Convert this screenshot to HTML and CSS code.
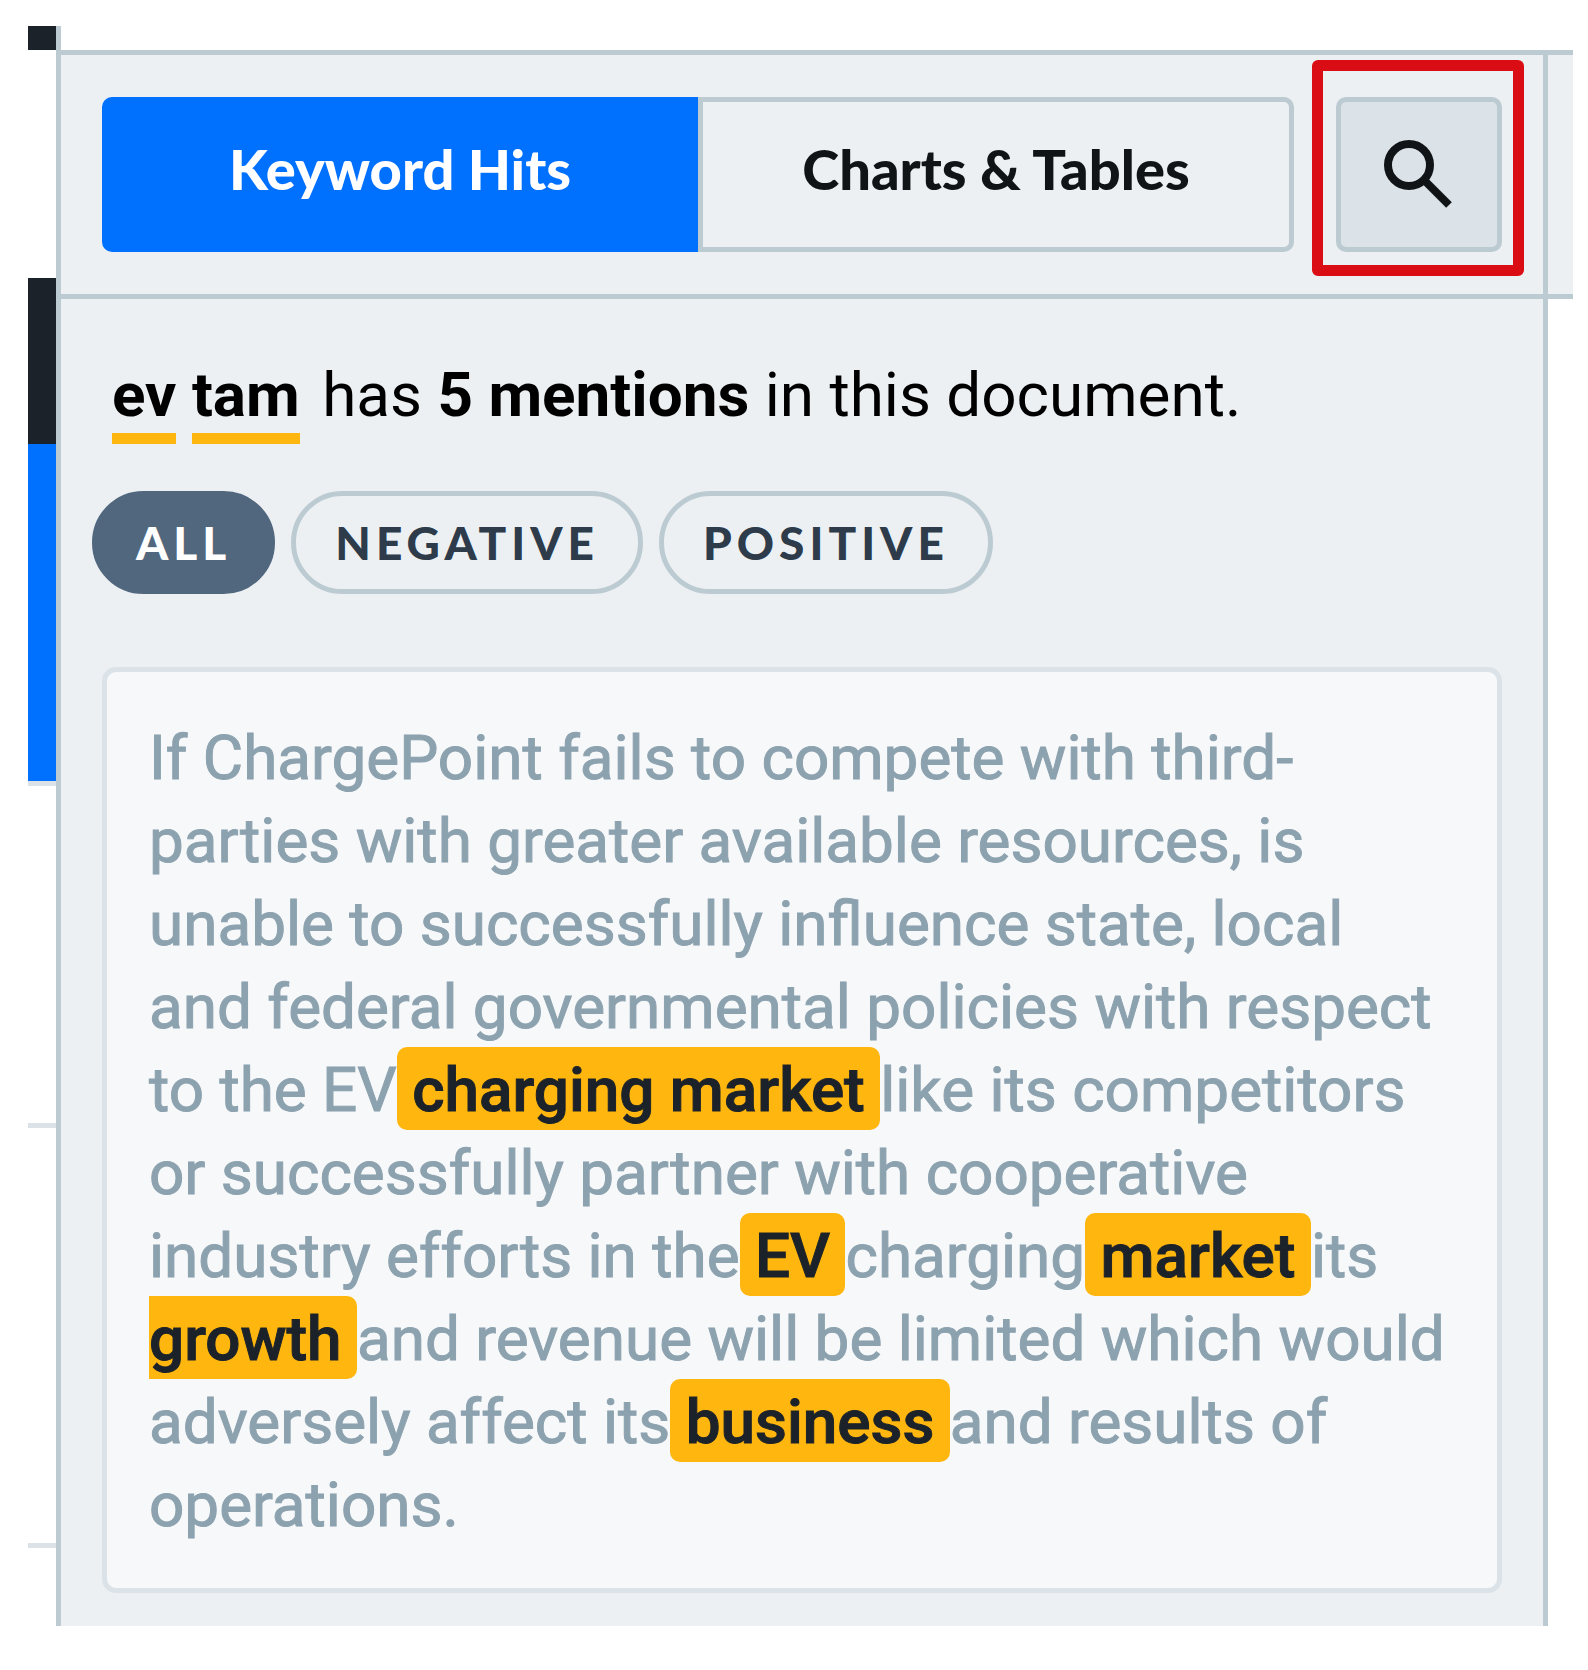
FILE: index.html
```html
<!DOCTYPE html>
<html lang="en">
<head>
    <meta charset="UTF-8">
    <meta name="viewport" content="width=device-width, initial-scale=1.0">
    <title>Keyword Hits</title>
    <link rel="stylesheet" href="styles.css">
</head>
<body>
    <div class="viewer">
        <!-- Edge of the document behind the panel -->
        <div class="rail">
            <div class="rail-top"></div>
            <div class="rail-space"></div>
            <div class="rail-dark"></div>
            <div class="rail-blue"></div>
            <div class="rail-row"></div>
            <div class="rail-row rail-row-tall"></div>
        </div>

        <div class="sidebar">
            <div class="panel">
                <div class="panel-header">
                    <div class="tabs">
                        <button type="button" class="tab active">Keyword Hits</button>
                        <button type="button" class="tab">Charts &amp; Tables</button>
                    </div>
                    <div class="search">
                        <button type="button" class="search-button" aria-label="Search">
                            <svg viewBox="0 0 70 70" width="70" height="70" fill="none" stroke="#101417">
                                <circle cx="25" cy="25" r="21" stroke-width="8"/>
                                <path d="M42 42L65 65" stroke-width="8"/>
                            </svg>
                        </button>
                        <div class="callout"></div>
                    </div>
                </div>

                <div class="panel-body">
                    <p class="summary"><b class="term">ev</b> <b class="term">tam</b> <span class="count">has <b>5 mentions</b> in this document.</span></p>

                    <div class="filters">
                        <button type="button" class="pill active">ALL</button>
                        <button type="button" class="pill">NEGATIVE</button>
                        <button type="button" class="pill">POSITIVE</button>
                    </div>

                    <div class="card">
                        <p>If ChargePoint fails to compete with third-parties with greater available resources, is unable to successfully influence state, local and federal governmental policies with respect to the EV<mark> charging market </mark>like its competitors or successfully partner with cooperative industry efforts in the<mark> EV </mark>charging<mark> market </mark>its<mark> growth </mark>and revenue will be limited which would adversely affect its<mark> business </mark>and results of operations.</p>
                    </div>
                </div>
            </div>
        </div>

        <div class="gutter"></div>
    </div>
</body>
</html>
```
FILE: styles.css
```css
* {
    box-sizing: border-box;
}

body {
    margin: 0;
    padding: 26px 15px 44px 28px;
    background: #fff;
    font-family: Roboto, sans-serif;
}

button {
    margin: 0;
    cursor: pointer;
}

.viewer {
    display: flex;
}

/* Left edge */
.rail {
    width: 28px;
}

.rail-top {
    height: 24px;
    background: #1c2229;
}

.rail-space {
    height: 228px;
}

.rail-dark {
    height: 166px;
    background: #1c2229;
}

.rail-blue {
    height: 337px;
    background: #0070ff;
}

.rail-row {
    height: 342px;
    border-top: 5px solid #dbe3e8;
}

.rail-row-tall {
    height: 425px;
    border-bottom: 5px solid #dbe3e8;
}

/* Panel */
.sidebar {
    flex: 1;
    padding-top: 24px;
    border-left: 5px solid #bccbd2;
}

.panel {
    border-right: 5px solid #bccbd2;
    background: #ecf0f3;
}

.panel-header {
    display: flex;
    gap: 42px;
    padding: 42px 41px;
    border-top: 5px solid #bccbd2;
    border-bottom: 5px solid #bccbd2;
}

.gutter {
    width: 25px;
    height: 249px;
    margin-top: 24px;
    border-top: 5px solid #bccbd2;
    border-bottom: 5px solid #bccbd2;
    background: #ecf0f3;
}

.tabs {
    display: flex;
    flex: 1;
}

.tab {
    flex: 1;
    height: 155px;
    padding: 0 0 12px;
    border: 5px solid #bccbd2;
    border-radius: 0 10px 10px 0;
    background: transparent;
    color: #101417;
    font-family: Lato, sans-serif;
    font-size: 56px;
    font-weight: 900;
}

.tab.active {
    border-color: #0070ff;
    border-radius: 10px 0 0 10px;
    background: #0070ff;
    color: #fff;
}

.search {
    position: relative;
}

.search-button {
    display: flex;
    align-items: center;
    justify-content: center;
    width: 166px;
    height: 155px;
    padding: 0;
    border: 5px solid #bccbd2;
    border-radius: 10px;
    background: #dbe2e8;
}

/* Red frame over the search button */
.callout {
    position: absolute;
    top: -37px;
    right: -22px;
    bottom: -24px;
    left: -24px;
    border: 11px solid #d90d13;
    border-radius: 6px;
    pointer-events: none;
}

.panel-body {
    padding: 54px 41px 33px;
}

.summary {
    margin: 0 10px 54px;
    color: #000;
    font-size: 62px;
    line-height: 84px;
}

.term {
    padding-bottom: 2px;
    border-bottom: 11px solid #ffb60f;
}

.count {
    margin-left: 7px;
}

.filters {
    display: flex;
    gap: 16px;
    margin: 0 -10px 73px;
}

.pill {
    height: 103px;
    padding: 0 39px;
    border: 5px solid #bccbd2;
    border-radius: 52px;
    background: transparent;
    color: #2d3b4a;
    font-family: Lato, sans-serif;
    font-size: 46px;
    font-weight: 900;
    letter-spacing: 5px;
}

.pill.active {
    border-color: #51677e;
    background: #51677e;
    color: #fff;
}

.card {
    padding: 44px 42px 42px;
    border: 5px solid #dbe3e8;
    border-radius: 14px;
    background: #f7f8fa;
}

.card p {
    margin: 0;
    color: #8ca2af;
    font-size: 62px;
    line-height: 83px;
    -webkit-text-stroke: 1px;
}

mark {
    padding: 6px 0 4px;
    border-radius: 10px;
    background: #ffb60f;
    color: #1c2229;
    font-weight: 500;
}
```
